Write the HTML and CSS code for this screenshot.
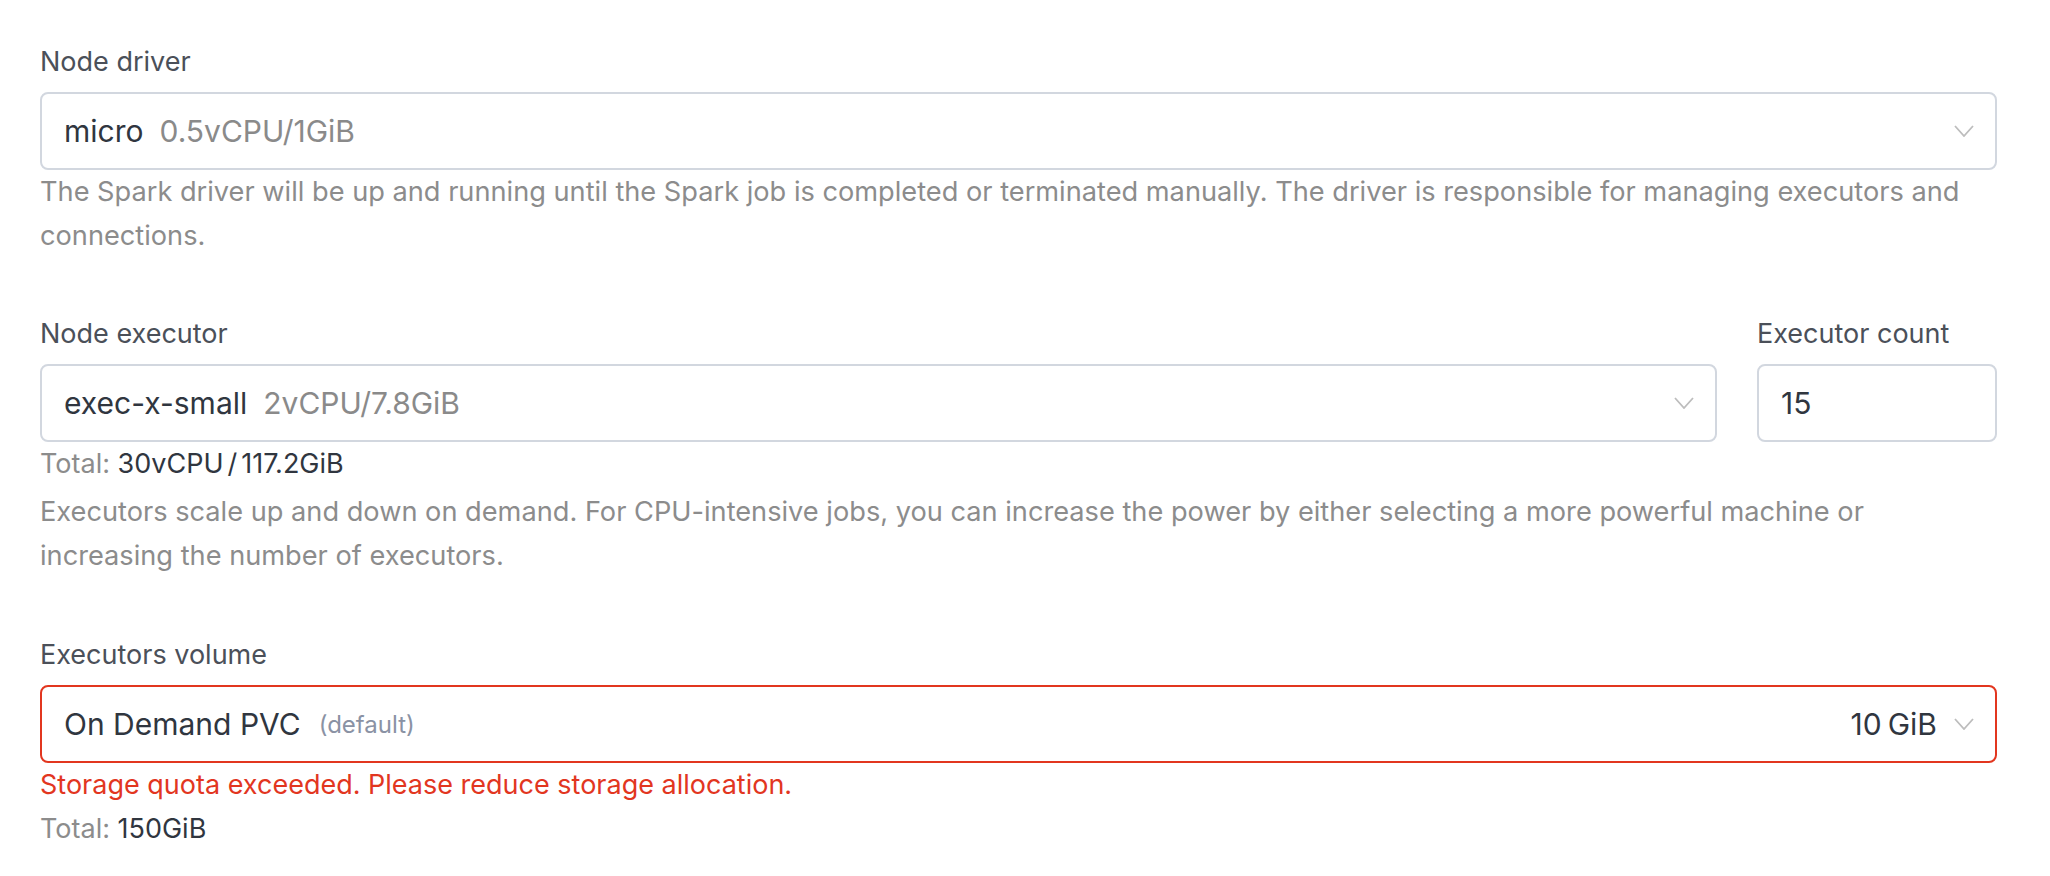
FILE: index.html
```html
<!DOCTYPE html>
<html lang="en">
<head>
<meta charset="utf-8">
<title>Spark resources</title>
<link rel="stylesheet" href="styles.css">
</head>
<body>
<div class="form">
  <div class="field">
    <div class="label">Node driver</div>
    <div class="select">
      <span class="value">micro</span>
      <span class="spec">0.5vCPU/1GiB</span>
      <svg class="chev" width="20" height="12" viewBox="0 0 20 12"><polyline points="1,1 10,11 19,1" fill="none" stroke="#bdbdbd" stroke-width="1.8"/></svg>
    </div>
    <p class="help">The Spark driver will be up and running until the Spark job is completed or terminated manually. The driver is responsible for managing executors and connections.</p>
  </div>

  <div class="field field-row">
    <div class="col col-grow">
      <div class="label">Node executor</div>
      <div class="select">
        <span class="value">exec-x-small</span>
        <span class="spec">2vCPU/7.8GiB</span>
        <svg class="chev" width="20" height="12" viewBox="0 0 20 12"><polyline points="1,1 10,11 19,1" fill="none" stroke="#bdbdbd" stroke-width="1.8"/></svg>
      </div>
    </div>
    <div class="col col-count">
      <div class="label">Executor count</div>
      <div class="input"><span class="value">15</span></div>
    </div>
  </div>
  <div class="total">Total: <span class="total-value">30vCPU<span class="slash">/</span>117.2GiB</span></div>
  <p class="help help-after">Executors scale up and down on demand. For CPU-intensive jobs, you can increase the power by either selecting a more powerful machine or increasing the number of executors.</p>

  <div class="field field-volume">
    <div class="label">Executors volume</div>
    <div class="select select-error">
      <span class="value">On Demand PVC</span>
      <span class="default">(default)</span>
      <span class="size"><span class="size-num">10</span>GiB</span>
      <svg class="chev chev-after" width="20" height="12" viewBox="0 0 20 12"><polyline points="1,1 10,11 19,1" fill="none" stroke="#bdbdbd" stroke-width="1.8"/></svg>
    </div>
    <div class="error">Storage quota exceeded. Please reduce storage allocation.</div>
    <div class="total">Total: <span class="total-value">150GiB</span></div>
  </div>
</div>
</body>
</html>
```
FILE: styles.css
```css
html, body {
  margin: 0;
  padding: 0;
  background: #ffffff;
}

body {
  font-family: "Inter", "Noto Sans", sans-serif;
  color: #30363f;
}

.form {
  width: 1957px;
  padding: 40px 0 0 40px;
}

.label {
  font-size: 27px;
  line-height: 44px;
  color: #4b5059;
  margin-bottom: 8px;
  white-space: nowrap;
}

.select,
.input {
  box-sizing: border-box;
  height: 78px;
  border: 2px solid #d2d7df;
  border-radius: 8px;
  display: flex;
  align-items: center;
  padding: 0 21px 0 22px;
  background: #fff;
}

.select-error {
  border-color: #e2361f;
}

.value {
  font-size: 30px;
  color: #30363f;
  white-space: nowrap;
}

.spec {
  font-size: 30px;
  color: #8a8a8a;
  margin-left: 16px;
  white-space: nowrap;
}

.default {
  font-size: 24px;
  color: #8a92a4;
  margin-left: 18px;
}

.size {
  margin-left: auto;
  font-size: 30px;
  color: #30363f;
}

.size-num {
  margin-right: 6px;
}

.chev {
  margin-left: auto;
  flex: none;
}

.chev-after {
  margin-left: 17px;
}

.help {
  margin: 0;
  font-size: 27.2px;
  line-height: 44px;
  color: #8c8c8c;
}

.field-row {
  display: flex;
  gap: 40px;
  margin-top: 54px;
}

.col-grow {
  flex: 1;
  min-width: 0;
}

.col-count {
  width: 240px;
  flex: none;
}

.total {
  font-size: 27px;
  line-height: 44px;
  color: #8c8c8c;
}

.total-value {
  color: #30363f;
}

.slash {
  margin: 0 4px;
  color: #30363f;
}

.help-after {
  margin-top: 4px;
}

.field-volume {
  margin-top: 55px;
}

.error {
  font-size: 27px;
  line-height: 44px;
  color: #e2361f;
}
```
